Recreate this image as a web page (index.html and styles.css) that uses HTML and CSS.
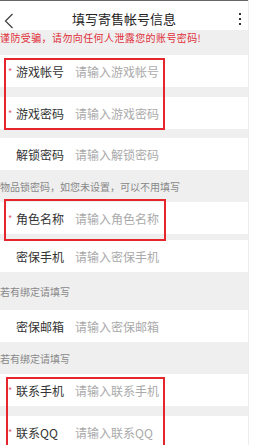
FILE: index.html
```html
<!DOCTYPE html>
<html lang="zh-CN">
<head>
  <meta charset="UTF-8">
  <meta name="viewport" content="width=device-width, initial-scale=1.0">
  <title>填写寄售帐号信息</title>
  <link rel="stylesheet" href="styles.css">
</head>
<body>
  <div class="app">
    <div class="header">
      <svg class="back" width="10" height="16" viewBox="0 0 10 16">
        <polyline points="8.5,1 1.5,8 8.5,15" fill="none" stroke="#444" stroke-width="1.3"/>
      </svg>
      <div class="title">填写寄售帐号信息</div>
      <div class="more"><span></span><span></span><span></span></div>
    </div>

    <div class="warn"><p>谨防受骗，请勿向任何人泄露您的账号密码!</p></div>

    <div class="row"><span class="star">*</span><span class="label">游戏帐号</span><span class="ph">请输入游戏帐号</span></div>
    <div class="row gap"><span class="star">*</span><span class="label">游戏密码</span><span class="ph">请输入游戏密码</span></div>
    <div class="row gap-s"><span class="star"></span><span class="label">解锁密码</span><span class="ph">请输入解锁密码</span></div>
    <div class="hint">物品锁密码，如您未设置，可以不用填写</div>
    <div class="row"><span class="star">*</span><span class="label">角色名称</span><span class="ph">请输入角色名称</span></div>
    <div class="row gap-xs"><span class="star"></span><span class="label">密保手机</span><span class="ph">请输入密保手机</span></div>
    <div class="hint tall">若有绑定请填写</div>
    <div class="row"><span class="star"></span><span class="label">密保邮箱</span><span class="ph">请输入密保邮箱</span></div>
    <div class="hint">若有绑定请填写</div>
    <div class="row"><span class="star">*</span><span class="label">联系手机</span><span class="ph">请输入联系手机</span></div>
    <div class="row gap"><span class="star">*</span><span class="label">联系QQ</span><span class="ph">请输入联系QQ</span></div>

    <!-- 标注框 -->
    <div class="mark mark-1"></div>
    <div class="mark mark-2"></div>
    <div class="mark mark-3"></div>
    <div class="badge"></div>
  </div>
  <div class="side"></div>
</body>
</html>
```

FILE: styles.css
```css
body {
  margin: 0;
  display: flex;
  height: 445px;
  overflow: hidden;
  background-color: #fff;
  font-family: "Noto Sans CJK SC", "Noto Sans", sans-serif;
  color: #333;
}
.app {
  position: relative;
  width: 248px;
  background-color: #efefef;
  overflow: hidden;
}
.side {
  width: 10px;
  border-left: 1px solid #ececec;
  background-color: #fff;
}
.header {
  position: relative;
  z-index: 1;
  height: 29px;
  border-top: 1px solid #666;
  background-color: #fff;
  display: flex;
  align-items: center;
  justify-content: center;
}
.back {
  position: absolute;
  left: 4px;
  top: 12px;
}
.title {
  font-size: 13px;
  color: #222;
  margin-top: 5px;
}
.more {
  position: absolute;
  right: 7px;
  top: 12px;
  display: flex;
  flex-direction: column;
  gap: 3px;
}
.more span {
  width: 2px;
  height: 2px;
  background-color: #333;
}
.warn {
  height: 25px;
}
.warn p {
  margin: 0;
  padding-top: 1px;
  font-size: 10px;
  line-height: 13px;
  letter-spacing: 0.4px;
  color: #e0303a;
  white-space: nowrap;
}
.row {
  height: 32px;
  background-color: #fff;
  display: flex;
  align-items: center;
  font-size: 12px;
}
.row.gap {
  margin-top: 10px;
}
.row.gap-s {
  margin-top: 9px;
}
.row.gap-xs {
  margin-top: 6px;
}
.star {
  width: 16px;
  box-sizing: border-box;
  padding-left: 8px;
  color: #e06070;
  font-size: 9px;
}
.label {
  width: 59px;
  color: #333;
  white-space: nowrap;
}
.ph {
  color: #aaa;
  white-space: nowrap;
}
.hint {
  height: 32px;
  display: flex;
  align-items: center;
  font-size: 10px;
  color: #888;
  white-space: nowrap;
}
.hint.tall {
  height: 38px;
}
.mark {
  position: absolute;
  border: 2.5px solid #e5262d;
  box-sizing: border-box;
}
.mark-1 {
  left: 4px;
  top: 58px;
  width: 161px;
  height: 72px;
}
.mark-2 {
  left: 4px;
  top: 199px;
  width: 162px;
  height: 42px;
}
.mark-3 {
  left: 6px;
  top: 377px;
  width: 159px;
  height: 90px;
}
.badge {
  position: absolute;
  right: -3px;
  top: 7px;
  width: 5px;
  height: 6px;
  border-radius: 50%;
  background-color: #e5262d;
}
```
